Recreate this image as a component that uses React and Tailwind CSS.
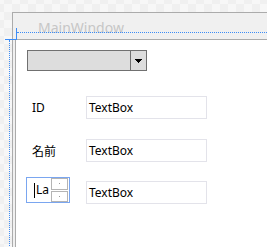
import React from "react";

function TextBox({ className = "" }) {
  return (
    <div
      className={`h-[23px] w-[121px] border border-[#e3e3ea] bg-white flex items-center pl-[2px] text-[12px] text-black ${className}`}
      style={{ fontFamily: '"Noto Sans", sans-serif' }}
    >
      TextBox
    </div>
  );
}

export default function App() {
  return (
    <div
      className="relative w-[267px] h-[247px] overflow-hidden bg-[#f7f7f7] bg-[conic-gradient(#f0f0f0_25%,#f7f7f7_0_50%,#f0f0f0_0_75%,#f7f7f7_0)] bg-[length:16px_16px] bg-[position:-4px_-4px]"
      style={{ fontFamily: '"Noto Sans", "Noto Sans CJK JP", sans-serif' }}
    >
      {/* window frame */}
      <div className="ml-[12px] mt-[12px] w-[300px] h-[260px] border-l border-t border-[#ababab] bg-[#f0f0f0] flex flex-col">
        <div className="h-[26px] flex items-center pl-[25px] pt-[4px] text-[14px] text-[#c6c6c6] leading-none">
          MainWindow
        </div>
        <div className="ml-[2px] flex-1 border-l border-t border-[#ababab] bg-white flex flex-col">
          {/* combobox */}
          <div className="mt-[10px] ml-[11px] h-[21px] w-[120px] border border-[#707070] bg-[#dddddd] flex">
            <div className="flex-1" />
            <div className="w-[16px] border-l border-[#707070] flex items-center justify-center">
              <svg width="7" height="4" viewBox="0 0 7 4" shapeRendering="crispEdges">
                <rect x="0" y="0" width="7" height="1" fill="#000" />
                <rect x="1" y="1" width="5" height="1" fill="#000" />
                <rect x="2" y="2" width="3" height="1" fill="#000" />
                <rect x="3" y="3" width="1" height="1" fill="#000" />
              </svg>
            </div>
          </div>

          {/* row 1 */}
          <div className="mt-[25px] flex items-center">
            <div className="ml-[16px] w-[54px] text-[12px] text-black">ID</div>
            <TextBox />
          </div>

          {/* row 2 */}
          <div className="mt-[20px] flex items-center">
            <div
              className="ml-[16px] w-[54px] text-[12px] text-black"
              style={{ fontFamily: '"Noto Sans CJK JP", sans-serif' }}
            >
              名前
            </div>
            <TextBox />
          </div>

          {/* row 3 */}
          <div className="mt-[15px] flex items-start">
            <div className="ml-[10px] w-[44px] h-[26px] border border-[#7aa6f0] bg-white flex">
              <div className="flex-1 overflow-hidden flex items-center pl-[7px] text-[12px] text-black">
                <div className="w-px h-[15px] bg-black mr-px shrink-0" />
                <span className="whitespace-nowrap">La</span>
              </div>
              <div className="w-[18px] flex flex-col gap-px pr-px">
                <div className="h-[12px] border border-[#b4b4b4] bg-white flex items-center justify-center">
                  <div className="w-px h-px bg-[#9a9a9a]" />
                </div>
                <div className="h-[12px] border border-[#b4b4b4] bg-white flex items-center justify-center">
                  <div className="w-px h-px bg-[#9a9a9a]" />
                </div>
              </div>
            </div>
            <TextBox className="ml-[16px] mt-[4px]" />
          </div>
        </div>
      </div>

      {/* designer adorners */}
      <div className="absolute left-[17px] top-[32px] w-[260px] border-t border-dotted border-[#3d8cf5]" />
      <div className="absolute left-[16px] top-[28px] w-px h-[12px] bg-[#3d8cf5]" />
      <div className="absolute left-[5px] top-[39px] w-[12px] h-px bg-[#3d8cf5]" />
      <div className="absolute left-[9px] top-[40px] h-[220px] border-l border-dotted border-[#3d8cf5]" />
    </div>
  );
}
